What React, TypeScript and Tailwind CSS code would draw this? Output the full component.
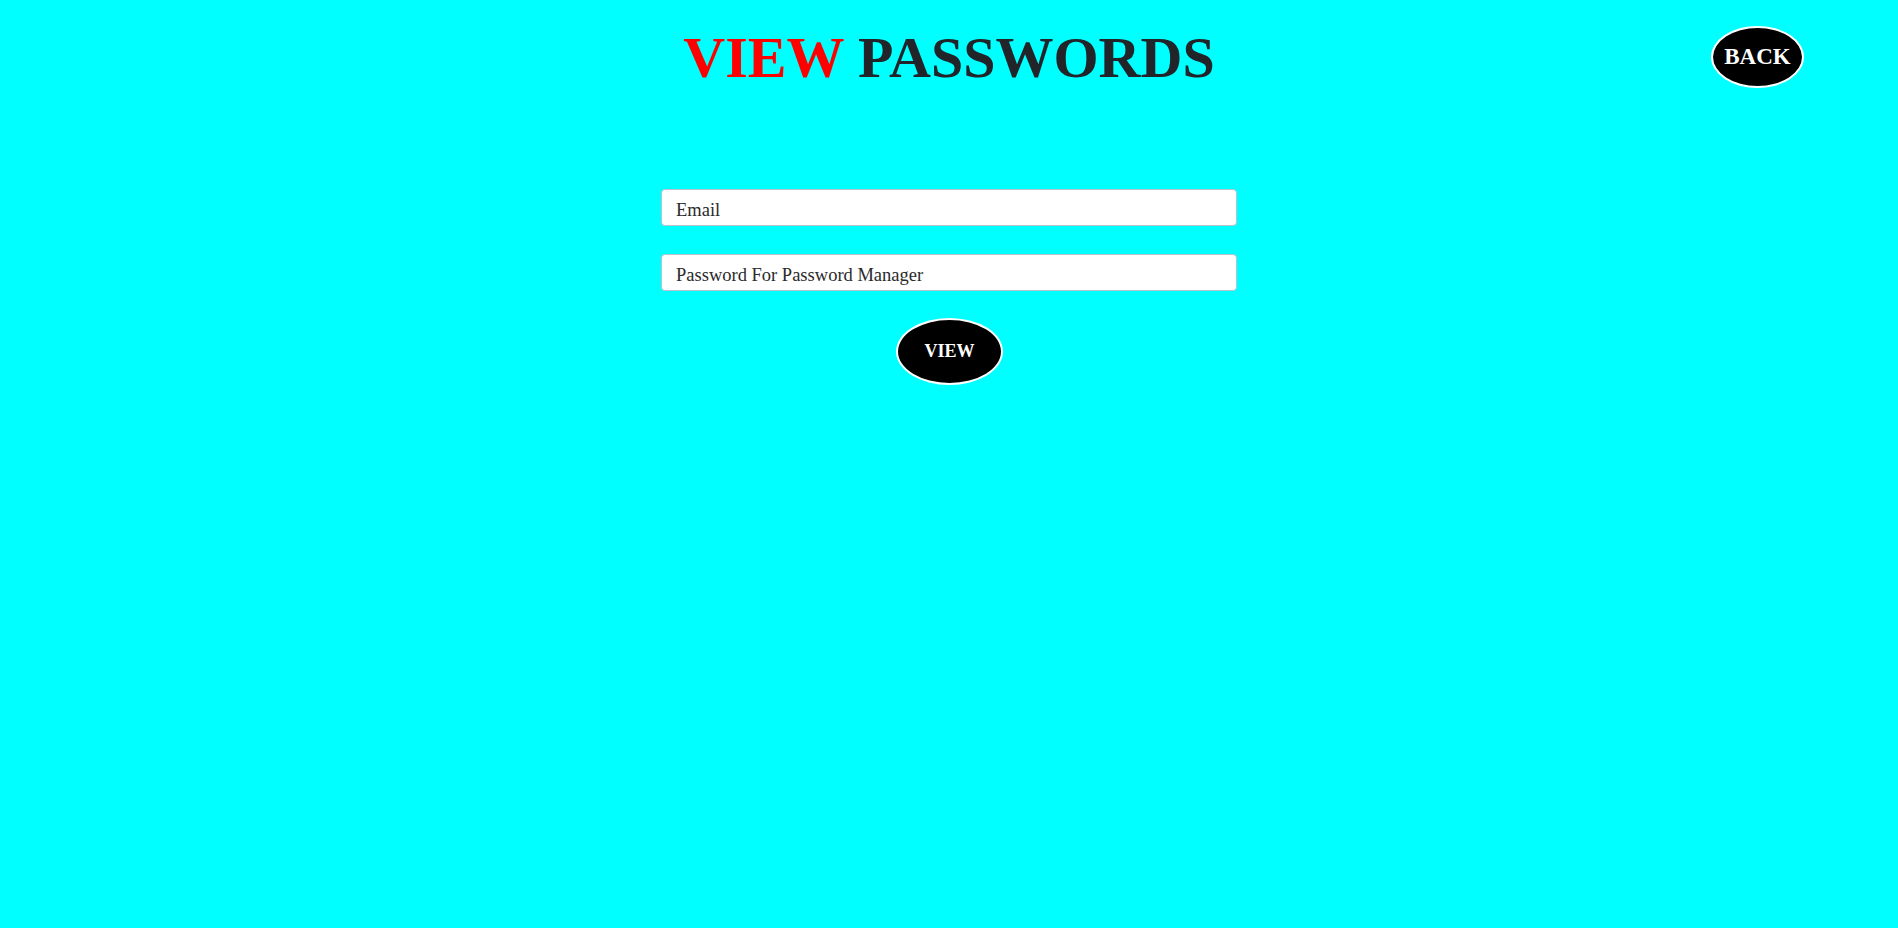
import React from 'react';

const serif = "font-['Liberation_Serif','Times_New_Roman',serif]";

const App: React.FC = () => {
  return (
    <div className={`min-h-[928px] w-full bg-[#00ffff] ${serif}`}>
      <header className="grid grid-cols-[1fr_auto_1fr] items-start">
        <div />
        <h1 className="mt-[24px] text-[58px] leading-[68px] font-bold text-[#212529] whitespace-nowrap">
          <span className="text-[#ff0000]">VIEW</span> PASSWORDS
        </h1>
        <div className="flex justify-end pr-[94px] pt-[26px]">
          <button className={`flex h-[62px] w-[93px] items-center justify-center rounded-[50%] border-2 border-white bg-black text-[23px] font-bold text-white ${serif}`}>
            BACK
          </button>
        </div>
      </header>

      <form className="mx-auto mt-[97px] flex w-[576px] flex-col items-center">
        <input
          type="text"
          placeholder="Email"
          className={`h-[37px] w-full rounded-[4px] border border-[#b9c1c9] bg-white px-[14px] pt-[6px] text-[18.5px] text-[#212529] placeholder:text-[#2a2a2a] outline-none ${serif}`}
        />
        <input
          type="password"
          placeholder="Password For Password Manager"
          className={`mt-[28px] h-[37px] w-full rounded-[4px] border border-[#b9c1c9] bg-white px-[14px] pt-[6px] text-[18.5px] text-[#212529] placeholder:text-[#2a2a2a] outline-none ${serif}`}
        />
        <button
          type="button"
          className={`mt-[27px] ml-[1px] flex h-[67px] w-[107px] items-center justify-center rounded-[50%] border-2 border-white bg-black text-[18px] font-bold text-white ${serif}`}
        >
          VIEW
        </button>
      </form>
    </div>
  );
};

export default App;
